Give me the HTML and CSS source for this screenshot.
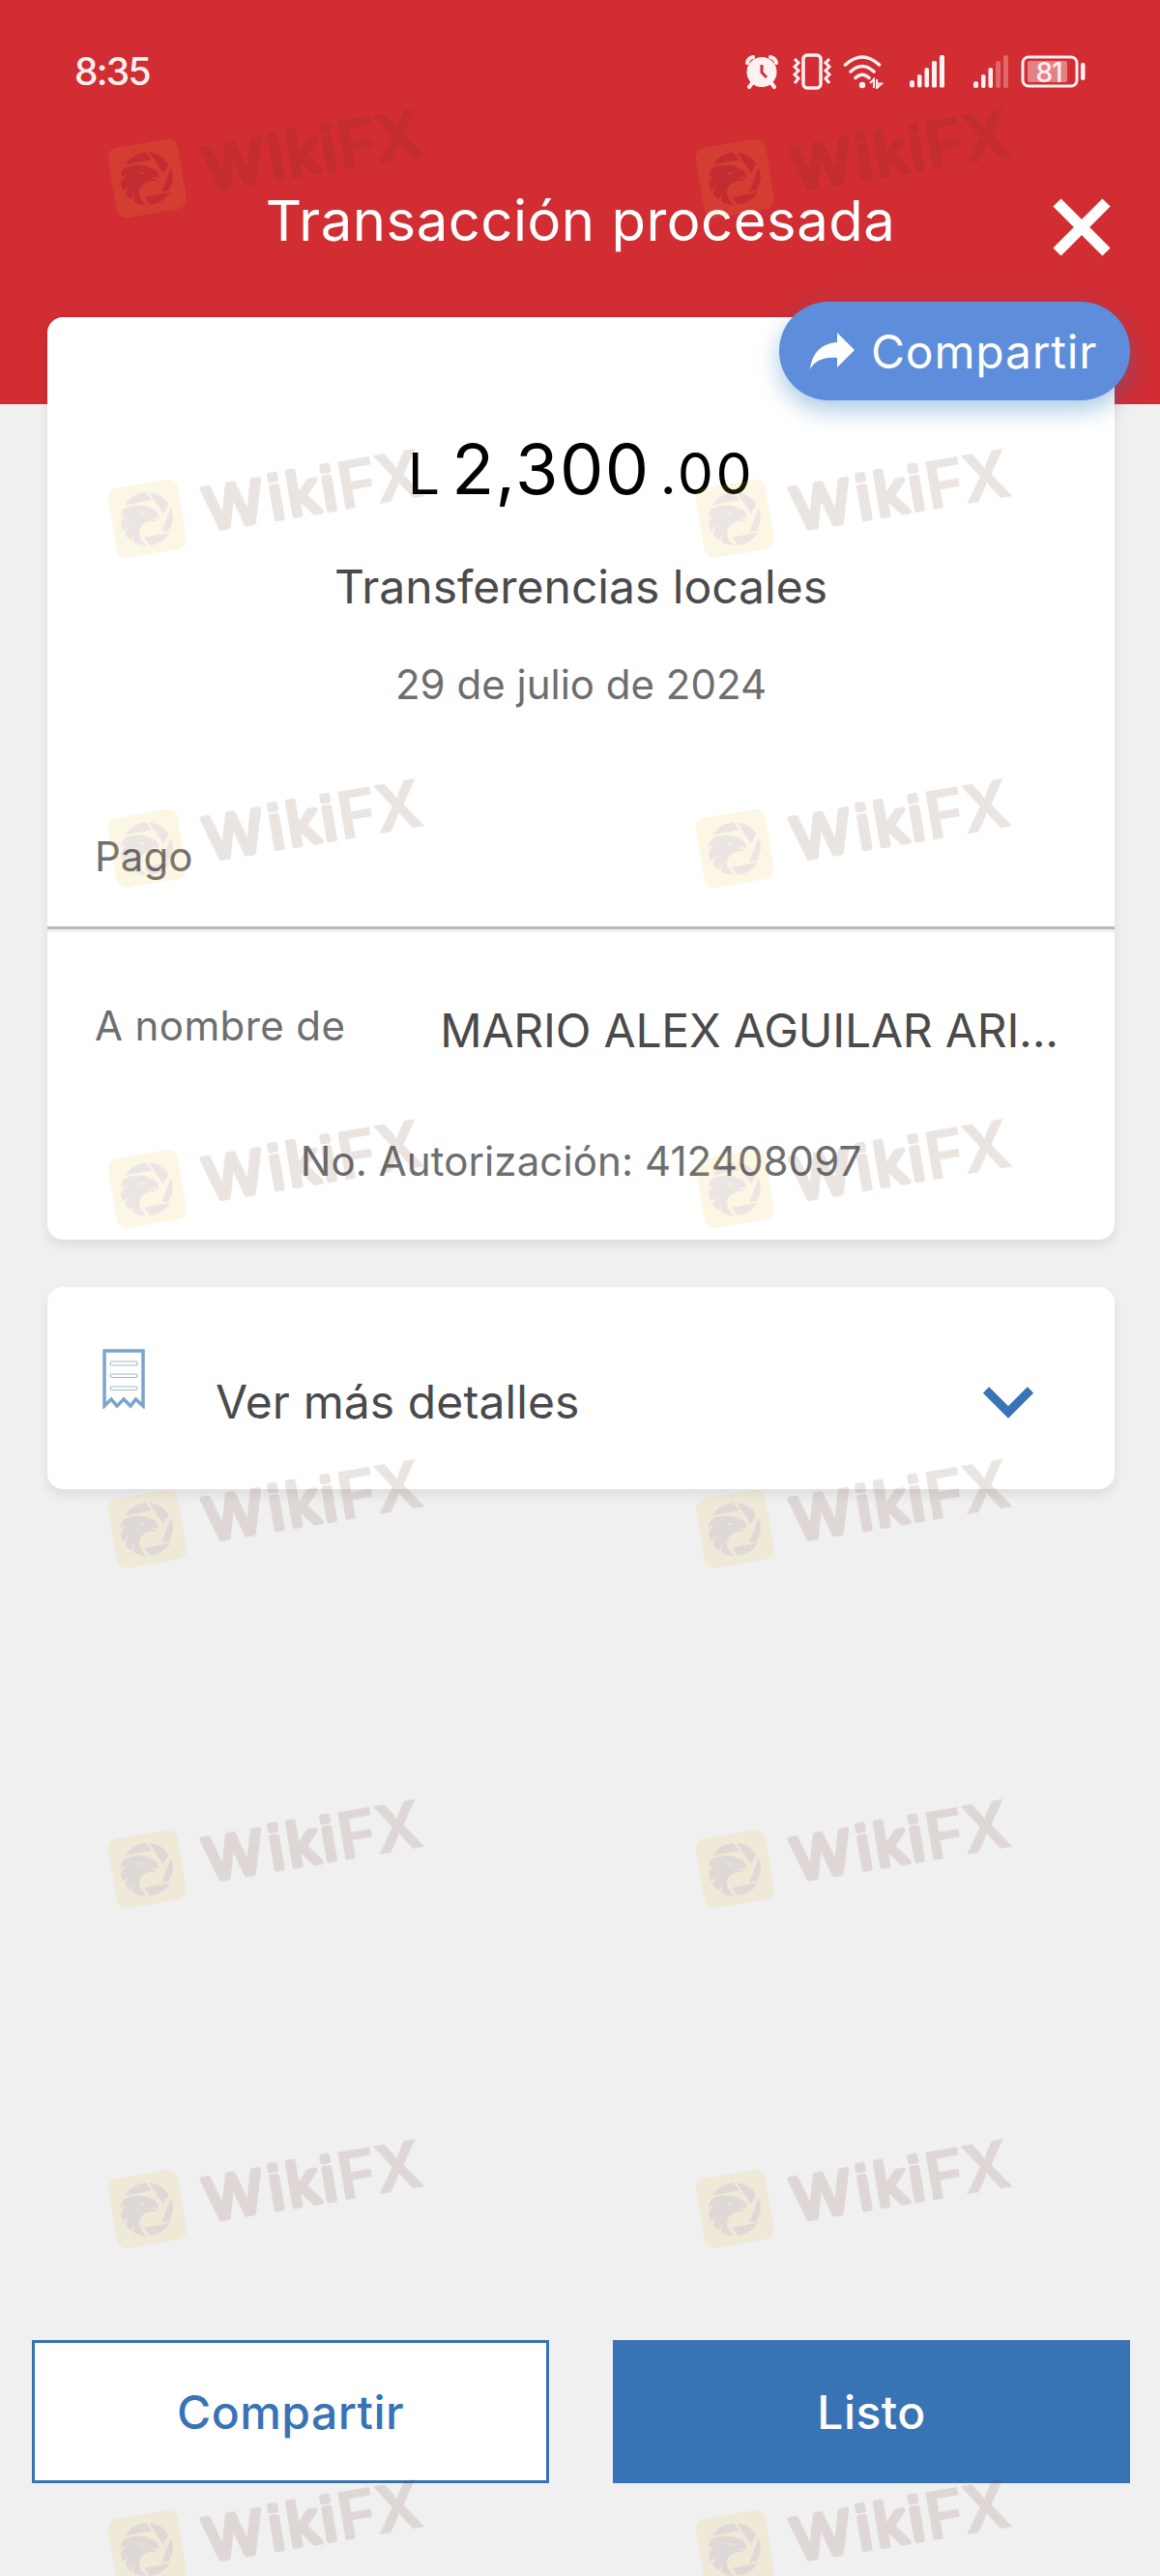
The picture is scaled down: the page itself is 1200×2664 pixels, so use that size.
FILE: index.html
```html
<!DOCTYPE html>
<html lang="es">
<head>
  <meta charset="UTF-8">
  <meta name="viewport" content="width=device-width, initial-scale=1.0">
  <title>Transacción procesada</title>
  <link rel="stylesheet" href="styles.css">
</head>
<body>
  <header class="header">
    <div class="status-bar">
      <span class="time">8:35</span>
      <div class="status-icons">
        <svg class="alarm" width="34" height="35" viewBox="0 0 34 35">
          <g fill="none" stroke="#fff0f1" stroke-width="4" stroke-linecap="round">
            <path d="M2 8Q3 3 8 2M32 8Q31 3 26 2M7 29L4 33M27 29L30 33"/>
          </g>
          <circle cx="17" cy="17.500" r="15.500" fill="#fff0f1"/>
          <path d="M17 10V18L22 23" fill="none" stroke="#d12d33" stroke-width="3"/>
        </svg>
        <svg class="vibrate" width="42" height="38" viewBox="0 0 42 38" fill="none" stroke="#fff0f1" stroke-width="3">
          <rect x="12" y="2" width="18" height="34" rx="4" stroke-width="3.500"/>
          <path d="M3 6L7 10L3 14L7 18L3 22L7 26L3 31M39 6L35 10L39 14L35 18L39 22L35 26L39 31"/>
        </svg>
        <svg class="wifi" width="42" height="35" viewBox="0 0 42 35">
          <g fill="none" stroke="#fff0f1" stroke-width="3.500" stroke-linecap="round">
            <path d="M2.500 10Q20 -6 37.500 10M8 17Q20 6 32 17M13 23.500Q20 17 27 23.500"/>
          </g>
          <circle cx="20" cy="31" r="3.200" fill="#fff0f1"/>
          <path d="M28 29L32 25V34M35 25V34L40 29.500H36" fill="none" stroke="#fff0f1" stroke-width="2"/>
        </svg>
        <svg class="signal" width="36" height="34" viewBox="0 0 36 34" fill="#fff0f1">
          <rect x="0" y="26" width="5" height="7.500" rx="2.500"/>
          <rect x="8" y="20" width="4.500" height="13.500" rx="2"/>
          <rect x="15.500" y="13" width="4.500" height="20.500" rx="2"/>
          <rect x="23" y="6" width="5" height="27.500" rx="1.500"/>
          <rect x="31" y="0" width="5" height="33.500" rx="1.500"/>
        </svg>
        <svg class="signal-2" width="36" height="34" viewBox="0 0 36 34" fill="#fff0f1">
          <rect x="0" y="27" width="5" height="7" rx="2.500"/>
          <rect x="8" y="20" width="4.500" height="14" rx="2"/>
          <rect x="15.500" y="13" width="4.500" height="21" rx="2"/>
          <rect x="23" y="6" width="5" height="28" rx="2" opacity=".3"/>
          <rect x="31" y="0" width="5" height="34" rx="2" opacity=".3"/>
        </svg>
        <svg class="battery" width="68" height="34" viewBox="0 0 68 34">
          <rect x="2" y="2" width="56" height="30" rx="6" fill="none" stroke="#fff0f1" stroke-width="3"/>
          <rect x="7" y="6" width="41" height="22" rx="2" fill="#fff" opacity=".4"/>
          <rect x="62" y="8" width="4.500" height="18" rx="2" fill="#fff0f1"/>
          <text class="battery-text" x="29" y="27.500" text-anchor="middle">81</text>
        </svg>
      </div>
    </div>
    <div class="title-bar">
      <h1>Transacción procesada</h1>
      <svg class="close" width="60" height="60" viewBox="0 0 60 60">
        <path d="M4.500 4.500L55.500 55.500M55.500 4.500L4.500 55.500" stroke="#fff" stroke-width="11.500"/>
      </svg>
    </div>
  </header>

  <main class="content">
    <section class="card receipt">
      <button class="share-pill">
        <svg width="46" height="38" viewBox="0 0 46 38">
          <path d="M28 0L46 18L28 36V26C14 25 5 29 0 38C2 21 12 11 28 10Z" fill="#fff"/>
        </svg>
        <span>Compartir</span>
      </button>
      <div class="amount">
        <span class="currency">L</span>
        <span class="units">2,300</span>
        <span class="cents">.00</span>
      </div>
      <p class="type">Transferencias locales</p>
      <p class="date">29 de julio de 2024</p>
      <p class="label payment">Pago</p>
      <div class="divider"></div>
      <div class="row">
        <span class="label name-label">A nombre de</span>
        <span class="name">MARIO ALEX AGUILAR ARI...</span>
      </div>
      <p class="auth">No. Autorización: 412408097</p>
    </section>

    <section class="card details">
      <svg class="receipt-icon" width="44" height="62" viewBox="0 0 44 62" fill="none">
        <path d="M2 59V2H42V59L34.500 52L29 59L22 52L15 59L9 52Z" stroke="#7ba5cb" stroke-width="3.500"/>
        <g stroke="#9fbdcd" stroke-width="1.200">
          <rect x="8" y="13" width="28" height="4" rx="1.500"/>
          <rect x="8" y="26" width="28" height="3.500" rx="1.500"/>
          <rect x="8" y="39" width="28" height="3.500" rx="1.500"/>
        </g>
      </svg>
      <span class="details-text">Ver más detalles</span>
      <svg class="chevron" width="52" height="33" viewBox="0 0 52 33">
        <path d="M3 3.500L26 26.500L49 3.500" fill="none" stroke="#3873b6" stroke-width="9"/>
      </svg>
    </section>
  </main>

  <footer class="actions">
    <button class="btn btn-outline">Compartir</button>
    <button class="btn btn-primary">Listo</button>
  </footer>

  <!-- repeated over the whole page -->
  <svg class="watermarks" width="1200" height="2664" viewBox="0 0 1200 2664">
    <defs>
      <g id="mark">
        <g transform="rotate(-9.600)">
          <rect x="-36.500" y="-36.500" width="73" height="73" rx="10" fill="#eebc2f"/>
          <text class="wiki" x="61 128 147 183" y="22.500">Wiki</text>
          <text class="fx" x="199.500 237.500" y="25">FX</text>
        </g>
        <g transform="scale(.3333) translate(-157 -349)" fill="#613228">
          <path d="M88 307Q108 272 152 267L171 291Z"/>
          <path d="M162 267Q205 272 223 305L207 333Z"/>
          <path d="M230 315Q246 350 224 387L202 390Z"/>
          <path d="M148 407L228 392Q205 428 165 431Z"/>
          <path d="M82 322C95 308 120 308 142 308C155 308 162 316 172 318C186 322 194 336 192 350C184 343 175 346 166 348C180 350 186 352 186 358C170 354 150 358 138 374C128 390 130 412 154 431C135 432 116 425 114 417L116 395L107 416Q94 407 88 397L101 370L83 388Q75 374 75 360L92 337L75 346Q77 330 82 322Z"/>
          <path d="M130 328Q142 334 152 330Q146 340 135 334Z" fill="#eebc2f"/>
        </g>
      </g>
      <g id="pair">
        <use href="#mark" x="152.300"/>
        <use href="#mark" x="760.300"/>
      </g>
    </defs>
    <use href="#pair" y="184.500"/>
    <use href="#pair" y="536.300"/>
    <use href="#pair" y="877.500"/>
    <use href="#pair" y="1229.500"/>
    <use href="#pair" y="1581.300"/>
    <use href="#pair" y="1933"/>
    <use href="#pair" y="2284.500"/>
    <use href="#pair" y="2636.300"/>
  </svg>
</body>
</html>
```
FILE: styles.css
```css
* {
  box-sizing: border-box;
}

body {
  margin: 0;
  position: relative;
  display: flex;
  flex-direction: column;
  width: 1200px;
  height: 2664px;
  overflow: hidden;
  background-color: #f0f0f0;
  font-family: 'Inter', 'Liberation Sans', sans-serif;
  color: #4a4a4c;
}

p, h1 {
  margin: 0;
  font-weight: 400;
}

svg {
  display: block;
  flex: none;
}

button {
  font-family: inherit;
  padding: 0;
}

/* Header */
.header {
  height: 418px;
  flex: none;
  background-color: #d12d33;
  color: #fff;
}

.status-bar {
  display: flex;
  justify-content: space-between;
  align-items: center;
  height: 148px;
  padding: 0 76px 0 77px;
}

.time {
  font-size: 39px;
  line-height: 50px;
  font-weight: 500;
  letter-spacing: -1.8px;
  color: #fff0f1;
}

.status-icons {
  display: flex;
  align-items: center;
}

.vibrate {
  margin-left: 14px;
}

.wifi {
  margin-left: 11px;
}

.signal {
  margin-left: 27px;
}

.signal-2 {
  margin-left: 30px;
}

.battery {
  margin-left: 13px;
}

.battery-text {
  font-size: 28px;
  font-weight: 500;
  letter-spacing: -1px;
  fill: #fff0f1;
}

.title-bar {
  display: flex;
  align-items: center;
  height: 160px;
  padding: 0 51px 0 112px;
}

.title-bar h1 {
  flex: 1;
  text-align: center;
  font-size: 58px;
  line-height: 70px;
  letter-spacing: 0.5px;
}

.close {
  margin-top: 14px;
}

/* Cards */
.content {
  margin: -90px 47px 0 49px;
}

.card {
  position: relative;
  background-color: #fff;
  border-radius: 16px;
  box-shadow: 0 6px 12px rgba(0, 0, 0, 0.08);
}

.receipt {
  height: 954px;
  padding-top: 117px;
}

.share-pill {
  position: absolute;
  top: -16px;
  right: -16px;
  display: flex;
  align-items: center;
  gap: 17px;
  width: 363px;
  height: 102px;
  padding-left: 32px;
  border: none;
  border-radius: 51px;
  background-color: #5d8ddb;
  box-shadow: 0 10px 24px rgba(40, 120, 185, 0.4);
  color: #fff;
  font-size: 48px;
  letter-spacing: 0.8px;
}

.amount {
  display: flex;
  justify-content: center;
  align-items: baseline;
  height: 80px;
  line-height: 80px;
  color: #000;
}

.currency {
  font-size: 59px;
}

.units {
  margin-left: 12px;
  font-size: 72px;
  letter-spacing: 1.5px;
}

.cents {
  margin-left: 10px;
  font-size: 59px;
  letter-spacing: 2.5px;
}

.type {
  margin-top: 52px;
  text-align: center;
  font-size: 48px;
  line-height: 60px;
}

.date {
  margin-top: 46px;
  text-align: center;
  font-size: 42px;
  line-height: 50px;
  color: #6d6e71;
}

.label {
  font-size: 42px;
  line-height: 50px;
  color: #6d6e71;
}

.payment {
  margin-top: 128px;
  padding-left: 49px;
}

.divider {
  height: 6px;
  margin-top: 47px;
  background-color: #eee;
  border-top: 3px solid #b9bab9;
}

.row {
  display: flex;
  justify-content: space-between;
  margin-top: 72px;
  padding: 0 58px 0 49px;
}

.name-label {
  letter-spacing: 0.4px;
}

.name {
  font-size: 48px;
  line-height: 60px;
  letter-spacing: -0.2px;
  white-space: nowrap;
}

.auth {
  margin-top: 80px;
  text-align: center;
  font-size: 42px;
  line-height: 50px;
  letter-spacing: 0.1px;
  color: #6d6e71;
}

.details {
  display: flex;
  align-items: flex-start;
  height: 209px;
  margin-top: 49px;
  padding: 64px 84px 0 57px;
}

.details-text {
  margin: 25px auto 0 73px;
  font-size: 48px;
  line-height: 60px;
  letter-spacing: 0.1px;
}

.chevron {
  margin-top: 39px;
}

/* Bottom buttons */
.actions {
  display: flex;
  gap: 66px;
  margin-top: auto;
  padding: 0 31px 96px 33px;
}

.btn {
  flex: 1;
  height: 148px;
  border: 3px solid #3873b6;
  font-size: 48px;
  font-weight: 500;
  letter-spacing: 0.5px;
}

.btn-outline {
  background-color: #fff;
  color: #3873b6;
}

.btn-primary {
  background-color: #3873b6;
  color: #fff;
}

/* Watermark overlay */
.watermarks {
  position: absolute;
  top: 0;
  left: 0;
  opacity: 0.12;
  pointer-events: none;
}

.wiki {
  font-family: 'Liberation Sans', Arial, sans-serif;
  font-size: 63px;
  font-weight: 400;
  fill: #612f1e;
  stroke: #612f1e;
  stroke-width: 5.5px;
  stroke-linejoin: round;
}

.fx {
  font-size: 69px;
  font-weight: 700;
  fill: #612f1e;
}
```
